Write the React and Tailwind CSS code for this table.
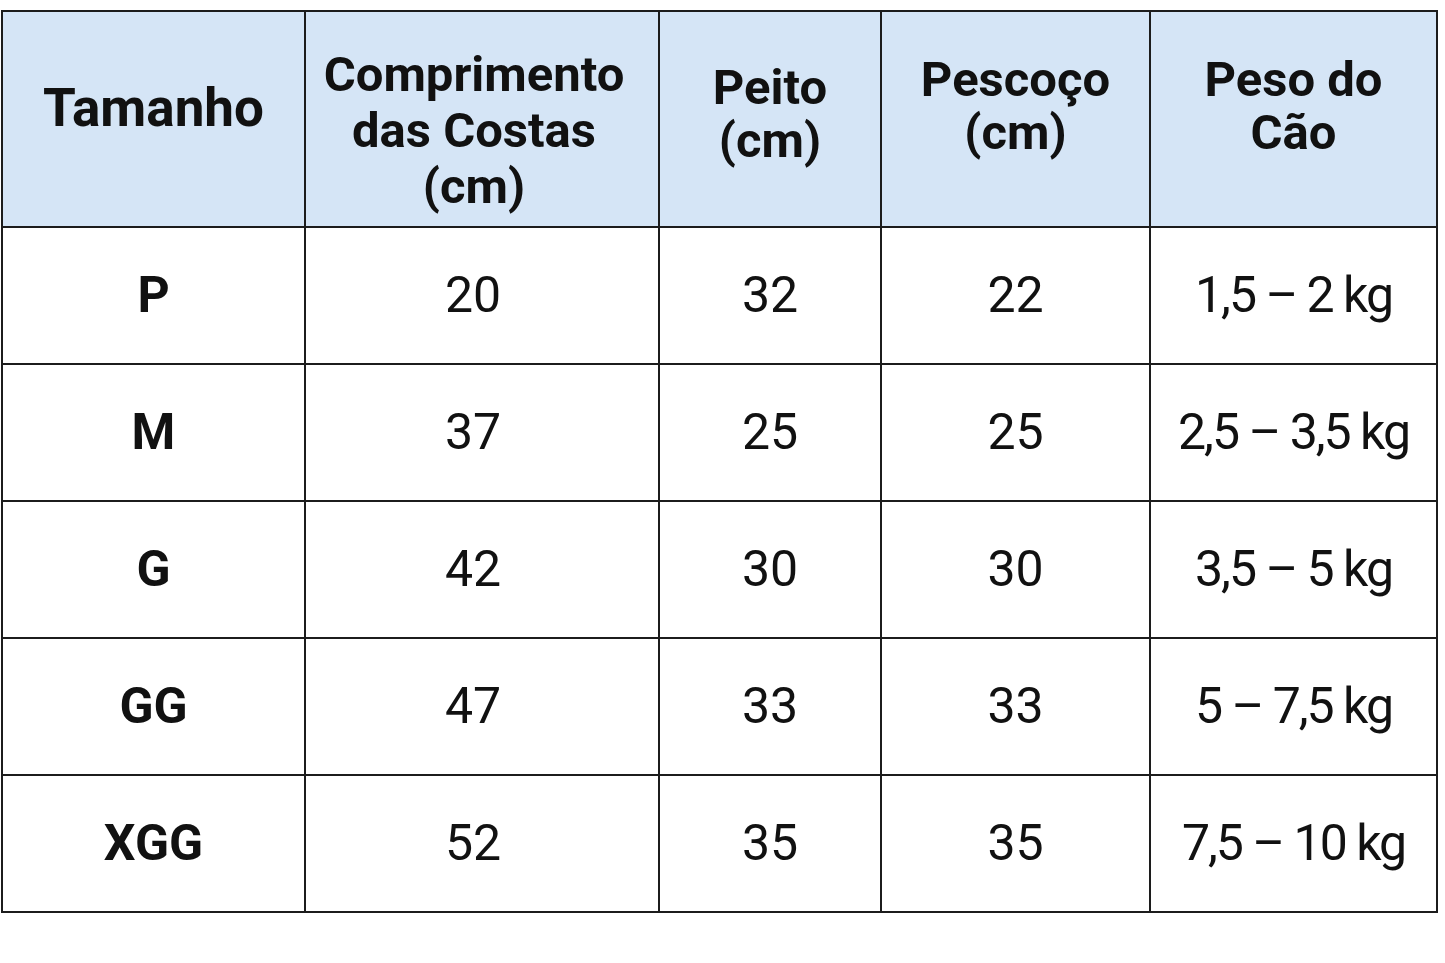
import React from 'react';

// header lines plus the small per-cell offsets seen in the reference
const HEADERS = [
    { lines: ['Tamanho'], cls: 'mb-[22px] text-[53px]' },
    { lines: ['Comprimento', 'das Costas', '(cm)'], cls: 'mt-[24px] pr-4 leading-[56px]' },
    { lines: ['Peito', '(cm)'], cls: 'mb-[11px]' },
    { lines: ['Pescoço', '(cm)'], cls: 'mb-[27px]' },
    { lines: ['Peso do', 'Cão'], cls: 'mb-[27px]' },
];

const ROWS = [
    ['P', '20', '32', '22', '1,5 – 2 kg'],
    ['M', '37', '25', '25', '2,5 – 3,5 kg'],
    ['G', '42', '30', '30', '3,5 – 5 kg'],
    ['GG', '47', '33', '33', '5 – 7,5 kg'],
    ['XGG', '52', '35', '35', '7,5 – 10 kg'],
];

const COL_WIDTHS = ['w-[303px]', 'w-[354px]', 'w-[222px]', 'w-[269px]', 'w-[287px]'];

export default function App() {
    return (
        <div className="w-[1445px] h-[963px] bg-white pt-[10px] font-['Roboto','Liberation_Sans',sans-serif] text-[#111]">
            <table className="border-collapse table-fixed w-[1436px] ml-px">
                <thead>
                    <tr className="h-[216px] bg-[#d5e5f6]">
                        {HEADERS.map((h, i) => (
                            <th key={i} className={`${COL_WIDTHS[i]} border-2 border-[#1c1c1c] text-[49px] font-bold leading-[53px] align-middle text-center`}>
                                <div className={h.cls}>
                                    {h.lines.map((l) => (
                                        <div key={l}>{l}</div>
                                    ))}
                                </div>
                            </th>
                        ))}
                    </tr>
                </thead>
                <tbody>
                    {ROWS.map((row) => (
                        <tr key={row[0]} className="h-[137px]">
                            {row.map((cell, j) => (
                                <td
                                    key={j}
                                    className={`border-2 border-[#1c1c1c] text-center align-middle text-[50px] ${j === 0 ? 'font-bold' : 'font-normal'} ${j === 1 ? 'pr-[18px]' : ''} ${j === 4 ? 'tracking-[-2px]' : ''}`}
                                >
                                    {cell}
                                </td>
                            ))}
                        </tr>
                    ))}
                </tbody>
            </table>
        </div>
    );
}
